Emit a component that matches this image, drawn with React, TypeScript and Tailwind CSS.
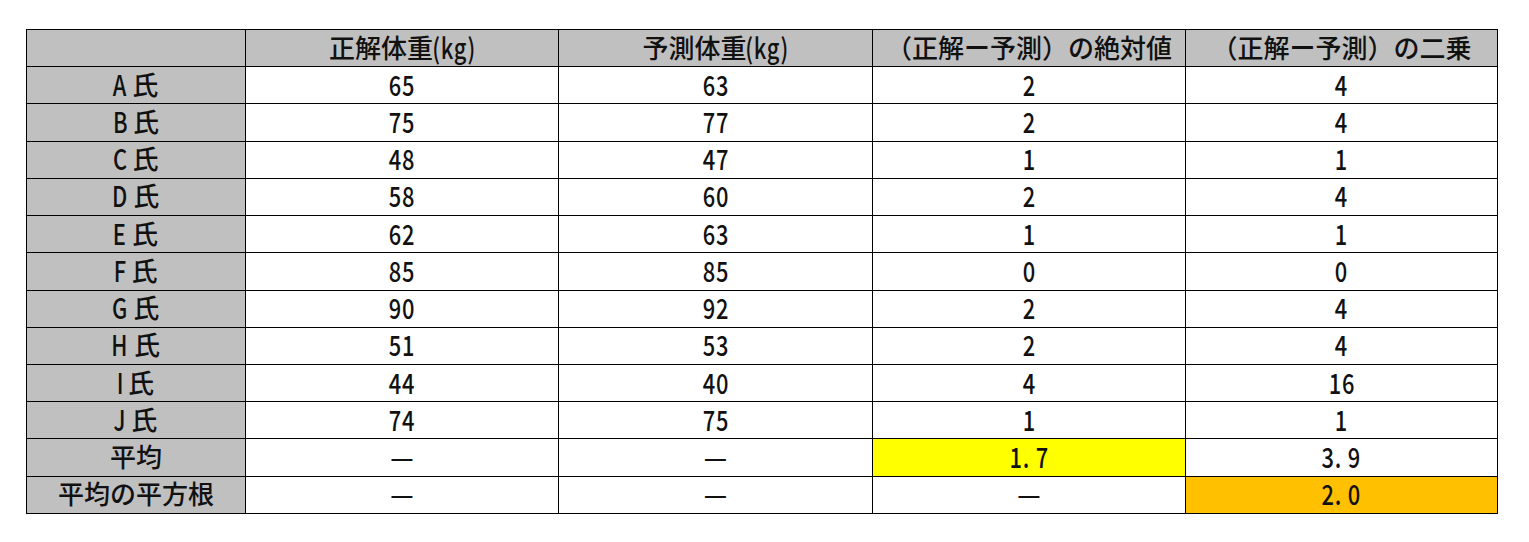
import React from "react";

const rows: [string, string, string, string, string][] = [
  ["A 氏", "65", "63", "2", "4"],
  ["B 氏", "75", "77", "2", "4"],
  ["C 氏", "48", "47", "1", "1"],
  ["D 氏", "58", "60", "2", "4"],
  ["E 氏", "62", "63", "1", "1"],
  ["F 氏", "85", "85", "0", "0"],
  ["G 氏", "90", "92", "2", "4"],
  ["H 氏", "51", "53", "2", "4"],
  ["I 氏", "44", "40", "4", "16"],
  ["J 氏", "74", "75", "1", "1"],
];

const font = { fontFamily: '"Noto Sans CJK JP", "Noto Sans", sans-serif' };

function Text({ text }: { text: string }) {
  const parts = text.match(/[\x20-\x7e]+|[^\x20-\x7e]+/g) || [];
  return (
    <span className="inline-flex items-center justify-center whitespace-nowrap">
      {parts.map((p, i) =>
        /^[\x20-\x7e]+$/.test(p) ? (
          <span
            key={i}
            className="inline-block origin-center scale-x-[0.78] whitespace-pre text-[28px] leading-none tracking-[1px]"
            style={{ marginLeft: `${-p.length * 1.8}px`, marginRight: `${-p.length * 1.8}px` }}
          >
            {p}
          </span>
        ) : (
          <span key={i} className="text-[26px] leading-none">
            {p}
          </span>
        )
      )}
    </span>
  );
}

function Cell({ text, className = "" }: { text?: string; className?: string }) {
  return (
    <td className={`h-[37.23px] border-[1.5px] border-black p-0 text-center align-middle font-medium text-[#111] ${className}`}>
      {text ? <Text text={text} /> : null}
    </td>
  );
}

export default function App() {
  return (
    <div className="min-h-[542px] w-[1529px] bg-white pl-[26px] pt-[29px]" style={font}>
      <table className="w-[1471px] table-fixed border-collapse">
        <colgroup>
          <col className="w-[219px]" />
          <col className="w-[313px]" />
          <col className="w-[314px]" />
          <col className="w-[313px]" />
          <col className="w-[312px]" />
        </colgroup>
        <tbody>
          <tr>
            <Cell className="bg-[#c0c0c0]" />
            <Cell className="bg-[#c0c0c0]" text="正解体重(kg)" />
            <Cell className="bg-[#c0c0c0]" text="予測体重(kg)" />
            <Cell className="bg-[#c0c0c0]" text="（正解ー予測）の絶対値" />
            <Cell className="bg-[#c0c0c0]" text="（正解ー予測）の二乗" />
          </tr>
          {rows.map((r) => (
            <tr key={r[0]}>
              <Cell className="bg-[#c0c0c0]" text={r[0]} />
              <Cell text={r[1]} />
              <Cell text={r[2]} />
              <Cell text={r[3]} />
              <Cell text={r[4]} />
            </tr>
          ))}
          <tr>
            <Cell className="bg-[#c0c0c0]" text="平均" />
            <Cell text="—" />
            <Cell text="—" />
            <Cell className="bg-[#ffff00]" text="1. 7" />
            <Cell text="3. 9" />
          </tr>
          <tr>
            <Cell className="bg-[#c0c0c0]" text="平均の平方根" />
            <Cell text="—" />
            <Cell text="—" />
            <Cell text="—" />
            <Cell className="bg-[#ffc000]" text="2. 0" />
          </tr>
        </tbody>
      </table>
    </div>
  );
}
